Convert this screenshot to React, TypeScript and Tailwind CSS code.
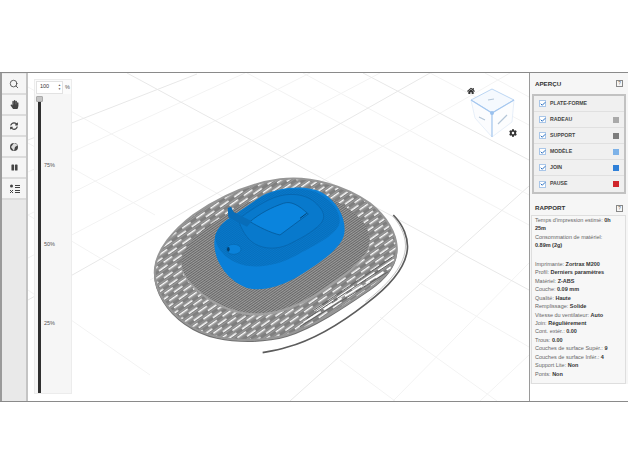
import { FaCog, FaHandPaper, FaHome, FaPause, FaSyncAlt } from "react-icons/fa";
import { Search, Check } from "lucide-react";

const previewRows = [
  { label: "PLATE-FORME", color: "" },
  { label: "RADEAU", color: "bg-[#a9a9a9]" },
  { label: "SUPPORT", color: "bg-[#7d7d7d]" },
  { label: "MODÈLE", color: "bg-[#7db2e8]" },
  { label: "JOIN", color: "bg-[#2f80d8]" },
  { label: "PAUSE", color: "bg-[#d0262b]" },
];

const reportRows: [string, string][] = [
  ["Imprimante: ", "Zortrax M200"],
  ["Profil: ", "Derniers paramètres"],
  ["Matériel: ", "Z-ABS"],
  ["Couche: ", "0.09 mm"],
  ["Qualité: ", "Haute"],
  ["Remplissage: ", "Solide"],
  ["Vitesse du ventilateur: ", "Auto"],
  ["Join: ", "Régulièrement"],
  ["Cont. extér.: ", "0.00"],
  ["Trous: ", "0.00"],
  ["Couches de surface Supér.: ", "9"],
  ["Couches de surface Infér.: ", "4"],
  ["Support Lite: ", "Non"],
  ["Ponts: ", "Non"],
];

const majorLines = [
  [28, 140, 197, 74],
  [28, 300, 430, 73],
  [290, 401, 529, 186],
  [127, 73, 529, 290],
  [363, 73, 529, 160],
];

const minorLines = [
  [28, 172, 245, 73],
  [28, 215, 310, 73],
  [28, 258, 380, 73],
  [150, 280, 510, 73],
  [393, 401, 529, 263],
  [480, 401, 529, 355],
  [28, 87, 300, 240],
  [247, 73, 529, 225],
  [303, 73, 529, 195],
  [430, 73, 529, 125],
  [485, 73, 529, 97],
  [28, 143, 155, 215],
  [28, 215, 120, 270],
  [28, 290, 150, 375],
  [380, 317, 497, 401],
  [418, 282, 529, 347],
  [340, 360, 395, 401],
];

const raft = "M45 295C50 240 100 180 160 135C240 80 330 40 420 28C510 15 620 50 690 100C740 140 770 190 770 235C770 280 740 320 690 355C610 410 520 470 440 495C380 512 300 515 230 500C160 485 100 440 70 390C52 360 42 325 45 295Z";
const support = "M125 272C130 225 180 180 240 145C300 105 370 70 450 62C530 55 620 100 665 150C690 180 695 215 680 245C650 290 590 330 530 370C480 400 420 428 360 430C290 432 220 400 175 360C140 330 122 300 125 272Z";

function Floor() {
  return (
    <g>
      {minorLines.map(([x1, y1, x2, y2]) => (
        <line key={`${x1}-${y1}`} x1={x1} y1={y1} x2={x2} y2={y2} stroke="#f3f3f3" strokeWidth="1" />
      ))}
      {majorLines.map(([x1, y1, x2, y2]) => (
        <line key={`${x1}-${y1}`} x1={x1} y1={y1} x2={x2} y2={y2} stroke="#e8e8e8" strokeWidth="1" />
      ))}
    </g>
  );
}

function Raft() {
  return (
    <g transform="translate(140 170) scale(0.3333)">
      <defs>
        <pattern id="slots" width="52" height="26" patternUnits="userSpaceOnUse" patternTransform="rotate(-35)">
          <rect width="52" height="26" fill="#7f7f7f" />
          <rect width="52" height="2.5" fill="#a0a0a0" />
          <rect y="13" width="52" height="2.5" fill="#a0a0a0" />
          <rect x="3" y="5.5" width="31" height="4.5" fill="#ffffff" />
          <rect x="29" y="18.5" width="31" height="4.5" fill="#ffffff" />
          <rect x="-23" y="18.5" width="31" height="4.5" fill="#ffffff" />
        </pattern>
        <pattern id="fine" width="8" height="6" patternUnits="userSpaceOnUse" patternTransform="rotate(-35)">
          <rect width="8" height="6" fill="#686868" />
          <rect width="8" height="3" fill="#9c9c9c" />
        </pattern>
      </defs>
      <path d={raft} transform="translate(0 4)" fill="none" stroke="#707070" strokeWidth="5" />
      <path d={raft} fill="url(#slots)" stroke="#969696" strokeWidth="6" />
      <path d="M530 425L762 268M490 458L752 292" fill="none" stroke="#ffffff" strokeWidth="5" strokeDasharray="62 12" />
      <path d="M520 422L756 262M500 446L748 282M480 470L745 305" fill="none" stroke="#5f5f5f" strokeWidth="3" />
      <path d={support} transform="translate(0 7)" fill="#a0a0a0" />
      <path d={support} fill="url(#fine)" />
      <path d="M760 135C790 165 806 205 802 240C795 300 740 355 680 400C610 455 520 510 440 532C415 540 390 544 368 548" fill="none" stroke="#5c5c5c" strokeWidth="5" />
      <path d="M758 138C785 168 800 205 796 238C790 295 735 350 676 396" fill="none" stroke="#a8a8a8" strokeWidth="2" />
    </g>
  );
}

// drawn in the coordinates of a 3x crop whose corner is at (205,180)
function BlueModel() {
  return (
    <g transform="translate(205 180) scale(0.3333)">
      <defs>
        <pattern id="bluefine" width="8" height="5" patternUnits="userSpaceOnUse" patternTransform="rotate(-35)">
          <rect width="8" height="5" fill="#0878cb" />
          <rect width="8" height="2" fill="#066db9" />
        </pattern>
      </defs>
      <path d="M28 190C28 165 38 142 62 122L170 48C220 22 300 12 352 38C398 65 424 115 418 160C412 200 360 240 270 295C225 320 170 335 130 325C80 310 28 255 28 190Z" fill="#0a80d8" />
      <path d="M30 172C34 150 50 132 70 118L170 50C220 25 295 16 345 42C388 68 412 105 402 135C385 170 330 195 282 222C232 250 182 264 130 258C85 252 36 222 30 172Z" fill="url(#bluefine)" />
      <path d="M100 118C130 95 170 68 205 54C250 36 305 40 335 72C358 94 362 112 348 130C322 158 282 178 247 195C215 208 180 208 150 192C125 177 108 147 100 118Z" fill="#0879cc" stroke="#0665ad" strokeWidth="2.5" />
      <path d="M135 125C165 100 200 82 235 70C258 62 280 75 310 102L225 165C195 158 160 140 135 125Z" fill="#0a84dd" stroke="#055a9b" strokeWidth="2.5" />
      <path d="M285 115L305 100" stroke="#03406f" strokeWidth="3" />
      <path d="M68 84L78 80L86 96L140 124L126 140L70 112Z" fill="#086db9" />
      <ellipse cx="86" cy="208" rx="22" ry="15" fill="#0a82da" stroke="#0666ad" strokeWidth="2" />
      <ellipse cx="70" cy="208" rx="4" ry="7" fill="#04406f" />
    </g>
  );
}

function ViewCube() {
  return (
    <g>
      <path d="M492 89L514 100L492 113L471 100Z" fill="#f5f9fe" stroke="#bcd6f3" strokeWidth="1" />
      <path d="M471 100L492 113L492 137L475 118Z" fill="#fbfcfe" stroke="#e1ebf8" strokeWidth="0.8" />
      <path d="M514 100L512 122L492 137L492 113Z" fill="#fcfdfe" stroke="#e1ebf8" strokeWidth="0.8" />
      <path d="M471 100L492 113L514 100M492 113L492 137" fill="none" stroke="#a3c6ef" strokeWidth="1.1" />
      <circle cx="492" cy="113" r="2" fill="#9ac1ee" />
      <path d="M488 100L494 99M479 117L485 120M498 124L507 115" stroke="#b4c6d8" strokeWidth="1.2" />
    </g>
  );
}

export default function App() {
  return (
    <div className="w-[628px] h-[472px] bg-white overflow-hidden font-['Liberation_Sans',Arial,sans-serif] flex flex-col">
      <div className="h-[72px] shrink-0" />
      <div className="h-[330px] shrink-0 flex border-y border-[#8a8a8a]">
        <div className="w-[28px] shrink-0 border-l-2 border-l-[#9a9a9a] border-r-2 border-r-[#c4c4c4] bg-[#e9e9e9] flex flex-col pt-[1px]">
          {[
            <Search key="s" size={10} strokeWidth={2} className="text-[#444]" />,
            <FaHandPaper key="h" size={9} className="text-[#444]" />,
            <FaSyncAlt key="r" size={8} className="text-[#444]" />,
            <svg key="c" width="10" height="10" viewBox="0 0 10 10"><circle cx="5" cy="5" r="4" fill="#444" /><path d="M5 1L9 3L6 5L5 9L2 5Z" fill="#ddd" /></svg>,
            <FaPause key="p" size={7} className="text-[#444]" />,
            <svg key="l" width="11" height="10" viewBox="0 0 11 10" fill="#444"><circle cx="2.5" cy="2" r="1.5" /><path d="M1 6l3 3M4 6l-3 3" stroke="#444" fill="none" /><rect x="6" y="1" width="5" height="1" /><rect x="6" y="3" width="5" height="1" /><rect x="6" y="6" width="5" height="1" /><rect x="6" y="8" width="5" height="1" /></svg>,
          ].map((icon, i) => (
            <div key={i} className="h-[21px] shrink-0 bg-[#f5f5f5] border-b-2 border-[#dcdcdc] flex items-center justify-center">
              {icon}
            </div>
          ))}
        </div>

        <div className="relative w-[501px] shrink-0 overflow-hidden bg-white">
          <svg className="absolute inset-0" width="501" height="328" viewBox="28 73 501 328">
            <Floor />
            <Raft />
            <BlueModel />
            <ViewCube />
          </svg>
          <FaHome size={8} className="absolute left-[439px] top-[14px] text-[#333]" />
          <FaCog size={8} className="absolute left-[481px] top-[56px] text-[#333]" />

          <div className="absolute left-[6px] top-[6px] w-[38px] h-[315px] bg-[#f6f6f6] border border-[#ececec]">
            <div className="flex items-center h-[14px] bg-[#fbfbfb] text-[5.5px] text-[#333]">
              <div className="ml-[1px] w-[27px] h-[13px] bg-white border border-[#e2e2e2] flex items-center justify-between pl-[3px] pr-[1px]">
                <span className="-mt-[1px]">100</span>
                <span className="flex flex-col text-[3px] leading-[4px] text-[#555]">
                  <span>▲</span>
                  <span>▼</span>
                </span>
              </div>
              <span className="ml-[2px] text-[#555]">%</span>
            </div>
            <div className="absolute left-[3px] top-[17px] w-[3px] h-[296px] bg-[#303030]" />
            <div className="absolute left-[1px] top-[16px] w-[7px] h-[6px] bg-[#c4c4c4] border border-[#aaa] rounded-[1px]" />
            <span className="absolute left-[9px] top-[82px] text-[5.5px] leading-[7px] text-[#555]">75%</span>
            <span className="absolute left-[9px] top-[161px] text-[5.5px] leading-[7px] text-[#555]">50%</span>
            <span className="absolute left-[9px] top-[240px] text-[5.5px] leading-[7px] text-[#555]">25%</span>
          </div>
        </div>

        <div className="flex-1 border-l border-[#9a9a9a] bg-white flex flex-col">
          <div className="bg-[#f6f6f6]">
            <div className="flex items-center justify-between h-[21px] pl-[5px] pr-[5px]">
              <span className="text-[6.2px] font-bold text-[#333]">APERÇU</span>
              <span className="w-[7px] h-[7px] border border-[#888] text-[4.5px] leading-[5px] text-center text-[#555]">?</span>
            </div>
            <div className="mx-[2px] border-2 border-[#c2c2c2] bg-[#f0f0f0]">
              {previewRows.map((row) => (
                <div key={row.label} className="h-[16px] flex items-center pl-[5px] pr-[5px] border-b border-[#e0e0e0] last:border-b-0">
                  <span className="w-[7px] h-[7px] bg-white border border-[#a9c6e8] flex items-center justify-center">
                    <Check size={6} strokeWidth={4} className="text-[#2a6fc0] shrink-0" />
                  </span>
                  <span className="ml-[4px] flex-1 text-[5.2px] font-bold text-[#444]">{row.label}</span>
                  {row.color && <span className={`w-[6px] h-[6px] ${row.color}`} />}
                </div>
              ))}
            </div>
            <div className="flex items-center justify-between h-[14px] pl-[5px] pr-[5px] mt-[7px]">
              <span className="text-[6.2px] font-bold text-[#333]">RAPPORT</span>
              <span className="w-[7px] h-[7px] border border-[#888] text-[4.5px] leading-[5px] text-center text-[#555]">?</span>
            </div>
            <div className="ml-[1px] mr-[2px] border border-[#dedede] bg-[#f7f7f7] px-[3px] text-[5.5px] leading-[8.45px] text-[#666] h-[169px]">
              <div>
                Temps d'impression estimé: <b className="text-[#333]">0h<br />25m</b>
              </div>
              <div>
                Consommation de matériel:<br /><b className="text-[#333]">0.89m (2g)</b>
              </div>
              <div className="h-[10px]" />
              {reportRows.map(([k, v]) => (
                <div key={k} className="whitespace-nowrap">
                  {k}
                  <b className="text-[#333]">{v}</b>
                </div>
              ))}
            </div>
          </div>
        </div>
      </div>
    </div>
  );
}
